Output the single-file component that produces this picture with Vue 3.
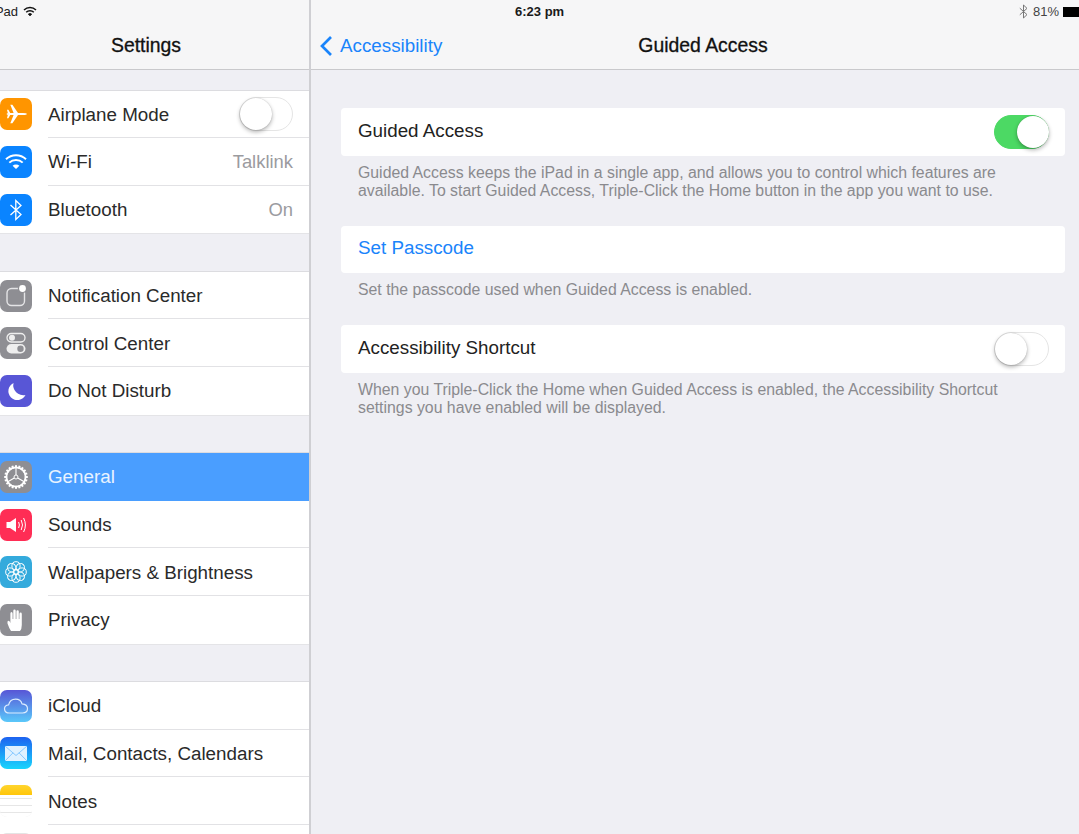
<script setup>
const groups = [
  [
    { label: 'Airplane Mode', icon: 'plane', toggle: true },
    { label: 'Wi-Fi', icon: 'wifi', value: 'Talklink' },
    { label: 'Bluetooth', icon: 'bt', value: 'On' },
  ],
  [
    { label: 'Notification Center', icon: 'notif' },
    { label: 'Control Center', icon: 'control' },
    { label: 'Do Not Disturb', icon: 'moon' },
  ],
  [
    { label: 'General', icon: 'gear', active: true },
    { label: 'Sounds', icon: 'sound' },
    { label: 'Wallpapers & Brightness', icon: 'flower' },
    { label: 'Privacy', icon: 'hand' },
  ],
  [
    { label: 'iCloud', icon: 'cloud' },
    { label: 'Mail, Contacts, Calendars', icon: 'mail' },
    { label: 'Notes', icon: 'notes' },
    { label: '', icon: 'none' },
  ],
]
const petals = [0, 45, 90, 135, 180, 225, 270, 315]
const teeth = Array.from({ length: 20 }, (_, i) => i * 18)
</script>

<template>
  <div class="ipad">
    <aside class="side">
      <header class="side-head">
        <div class="status status-left">
          <span class="carrier">iPad</span>
          <svg class="st-wifi" width="14" height="11" viewBox="0 0 14 11">
            <path d="M1 4 A8.5 8.5 0 0 1 13 4" fill="none" stroke="#111" stroke-width="1.5" />
            <path d="M3.2 6.2 A5.4 5.4 0 0 1 10.8 6.2" fill="none" stroke="#111" stroke-width="1.5" />
            <path d="M5.2 8.2 A2.6 2.6 0 0 1 8.8 8.2 L7 10 Z" fill="#111" stroke="#111" stroke-width=".6" />
          </svg>
        </div>
        <h1 class="title side-title">Settings</h1>
      </header>
      <div class="groups">
        <section v-for="(g, gi) in groups" :key="gi" class="group">
          <div v-for="row in g" :key="row.label" class="row" :class="{ active: row.active }">
            <span class="icon" :class="'i-' + row.icon">
              <svg v-if="row.icon === 'plane'" width="32" height="32" viewBox="0 0 32 32">
                <path d="M6.5 16 Q6.5 14.9 9.5 14.9 H13.6 L10.3 6.8 H12.4 L18 14.9 H23 Q26.8 14.9 26.8 16 Q26.8 17.1 23 17.1 H18 L12.4 25.2 H10.3 L13.6 17.1 H9.5 Q6.5 17.1 6.5 16 Z" fill="#fff" />
                <path d="M7 11.8 H8.4 L10.2 15 H7.8 Z M7 20.2 H8.4 L10.2 17 H7.8 Z" fill="#fff" />
              </svg>
              <svg v-else-if="row.icon === 'wifi'" width="32" height="32" viewBox="0 0 32 32">
                <path d="M6 13.2 A14.5 14.5 0 0 1 26 13.2" fill="none" stroke="#fff" stroke-width="2" />
                <path d="M9.3 16.6 A9.6 9.6 0 0 1 22.7 16.6" fill="none" stroke="#fff" stroke-width="2" />
                <path d="M12.6 19.8 A4.8 4.8 0 0 1 19.4 19.8 L16 23 Z" fill="#fff" />
              </svg>
              <svg v-else-if="row.icon === 'bt'" width="32" height="32" viewBox="0 0 32 32">
                <path d="M10.5 11 L21 20.5 L15.8 25.5 V6.5 L21 11.5 L10.5 21" fill="none" stroke="#fff" stroke-width="1.3" />
              </svg>
              <svg v-else-if="row.icon === 'notif'" width="32" height="32" viewBox="0 0 32 32">
                <rect x="7" y="8.5" width="17.5" height="17" rx="4.5" fill="none" stroke="#e4e4e6" stroke-width="1.4" />
                <circle cx="22.5" cy="8.5" r="4.6" fill="#8e8e93" />
                <circle cx="22.5" cy="8.5" r="3.4" fill="#fff" />
              </svg>
              <svg v-else-if="row.icon === 'control'" width="32" height="32" viewBox="0 0 32 32">
                <rect x="7" y="6.5" width="18" height="8.5" rx="4.25" fill="none" stroke="#eee" stroke-width="1.3" />
                <circle cx="12" cy="10.75" r="3" fill="#eee" />
                <rect x="6.5" y="17" width="19" height="9.5" rx="4.75" fill="#eee" />
                <circle cx="20.5" cy="21.75" r="3.2" fill="#8e8e93" />
              </svg>
              <svg v-else-if="row.icon === 'moon'" width="32" height="32" viewBox="0 0 32 32">
                <path d="M13.5 8 A9 9 0 1 0 25.5 20 A10 10 0 0 1 13.5 8 Z" fill="#fff" />
              </svg>
              <svg v-else-if="row.icon === 'gear'" width="32" height="32" viewBox="0 0 32 32">
                <g fill="#fff">
                  <rect v-for="t in teeth" :key="t" x="15" y="4.2" width="2" height="3" :transform="`rotate(${t} 16 16)`" />
                </g>
                <circle cx="16" cy="16" r="9.6" fill="none" stroke="#fff" stroke-width="1.8" />
                <circle cx="16" cy="16" r="2" fill="none" stroke="#fff" stroke-width="1" />
                <path d="M16 14 V7 M17.7 17 L23.8 20.5 M14.3 17 L8.2 20.5" stroke="#fff" stroke-width="1.1" />
              </svg>
              <svg v-else-if="row.icon === 'sound'" width="32" height="32" viewBox="0 0 32 32">
                <path d="M6.5 13 H10 L16 9 V23 L10 19 H6.5 Z" fill="#fff" />
                <path d="M18.6 13 Q20.2 16 18.6 19 M21.2 11 Q23.8 16 21.2 21 M23.6 9 Q27.2 16 23.6 23" fill="none" stroke="#fff" stroke-width="1" />
              </svg>
              <svg v-else-if="row.icon === 'flower'" width="32" height="32" viewBox="0 0 32 32">
                <g fill="none" stroke="#fff" stroke-width="1">
                  <circle v-for="p in petals" :key="p" cx="16" cy="9.8" r="4.1" :transform="`rotate(${p} 16 16)`" />
                  <circle cx="16" cy="16" r="2.4" />
                </g>
              </svg>
              <svg v-else-if="row.icon === 'hand'" width="32" height="32" viewBox="0 0 32 32">
                <path d="M11 27 Q9 24 7.5 19.5 Q7 17 8.4 16.8 Q9.6 16.7 10.4 19 V9.5 Q10.4 8 11.5 8 Q12.6 8 12.6 9.5 V15 H13.3 V6.8 Q13.3 5.4 14.5 5.4 Q15.7 5.4 15.7 6.8 V15 H16.4 V7.6 Q16.4 6.2 17.6 6.2 Q18.8 6.2 18.8 7.6 V15 H19.4 V10 Q19.4 8.6 20.6 8.6 Q21.8 8.6 21.8 10 V21 Q21.8 25 20 27 Z" fill="#fff" />
              </svg>
              <svg v-else-if="row.icon === 'cloud'" width="32" height="32" viewBox="0 0 32 32">
                <path d="M9.6 23 Q4.5 23 4.5 18.8 Q4.5 15.2 8.6 14.8 Q10 9.2 15.6 9.2 Q20.6 9.2 22 13.8 Q27.5 14.2 27.5 18.6 Q27.5 23 22.6 23 Z" fill="none" stroke="#dcecff" stroke-width="1.2" />
              </svg>
              <svg v-else-if="row.icon === 'mail'" width="32" height="32" viewBox="0 0 32 32">
                <rect x="5" y="9" width="22" height="15" fill="#dff1ff" />
                <path d="M5 9 L16 18.5 L27 9 M5 24 L13 15.8 M27 24 L19 15.8" fill="none" stroke="#7cc3ff" stroke-width=".9" />
              </svg>
              <span v-else-if="row.icon === 'notes'" class="note-lines"></span>
            </span>
            <span class="label">{{ row.label }}</span>
            <span v-if="row.value" class="value">{{ row.value }}</span>
            <span v-if="row.toggle" class="switch side-switch"><span class="knob"></span></span>
          </div>
        </section>
      </div>
    </aside>

    <main class="detail">
      <header class="detail-head">
        <div class="status status-main">
          <span class="time">6:23 pm</span>
          <span class="status-right">
            <svg width="9" height="15" viewBox="0 0 9 15">
              <path d="M.8 4.2 L8 10.6 L4.5 14 V1 L8 4.4 L.8 10.8" fill="none" stroke="#777" stroke-width="1" />
            </svg>
            <span class="batt-text">81%</span>
            <span class="battery"></span>
          </span>
        </div>
        <div class="nav">
          <span class="back">
            <svg width="14" height="22" viewBox="0 0 14 22">
              <path d="M12 2 L3 11 L12 20" fill="none" stroke="#1a84fb" stroke-width="2.7" />
            </svg>
            <span>Accessibility</span>
          </span>
          <h2 class="title nav-title">Guided Access</h2>
        </div>
      </header>
      <div class="content">
        <div class="card card-a">
          <span class="card-text">Guided Access</span>
          <span class="switch on"><span class="knob"></span></span>
        </div>
        <p class="note">Guided Access keeps the iPad in a single app, and allows you to control which features are<br>available. To start Guided Access, Triple-Click the Home button in the app you want to use.</p>
        <div class="card card-b link"><span class="card-text">Set Passcode</span></div>
        <p class="note single">Set the passcode used when Guided Access is enabled.</p>
        <div class="card card-c">
          <span class="card-text">Accessibility Shortcut</span>
          <span class="switch"><span class="knob"></span></span>
        </div>
        <p class="note">When you Triple-Click the Home when Guided Access is enabled, the Accessibility Shortcut<br>settings you have enabled will be displayed.</p>
      </div>
    </main>
  </div>
</template>

<style>
html, body { margin: 0; background: #efeff4; overflow: hidden; }
</style>

<style scoped>
.ipad {
  width: 1079px;
  height: 834px;
  display: flex;
  overflow: hidden;
  background: #efeff4;
  color: #222;
  font-family: "Liberation Sans", Arial, sans-serif;
  font-size: 18.8px;
}
.side {
  width: 311px;
  box-sizing: border-box;
  flex: none;
  height: 834px;
  overflow: hidden;
  border-right: 2px solid #cfcfd3;
}
.side-head, .detail-head {
  height: 69px;
  background: #f6f6f7;
  border-bottom: 1px solid #c9c9cc;
  position: relative;
}
.status { height: 23px; font-size: 13px; color: #222; display: flex; align-items: center; }
.status-left { margin-left: -8px; gap: 5px; }
.carrier { line-height: 23px; }
.title { margin: 0; font-size: 19.4px; font-weight: 400; text-align: center; color: #111; -webkit-text-stroke: .3px #111; line-height: 44px; }
.side-title { padding-right: 17px; }
.groups { padding-top: 20.6px; display: flex; flex-direction: column; gap: 38.5px; }
.group { background: #fff; box-shadow: 0 -1px 0 #dcdce0; }
.row {
  height: 47.6px;
  box-sizing: border-box;
  display: flex;
  align-items: center;
  position: relative;
  padding-right: 16px;
  color: #2a2a2a;
}
.row:not(:last-child)::after {
  content: "";
  position: absolute;
  left: 48px;
  right: 0;
  bottom: 0;
  height: 1px;
  background: #e2e2e5;
}
.group:nth-child(-n+3) { box-shadow: 0 -1px 0 #dcdce0, 0 1px 0 #e4e4e7; }
.row.active { background: #4a9eff; color: #e9f3ff; }
.row.active::after { display: none; }
.icon {
  width: 32px;
  height: 32px;
  border-radius: 7px;
  flex: none;
  margin-right: 16px;
  overflow: hidden;
  display: block;
}
.icon svg { display: block; }
.i-plane { background: #ff9500; }
.i-wifi, .i-bt { background: #0a84ff; }
.i-notif, .i-control, .i-gear, .i-hand { background: #8e8e93; }
.i-moon { background: #5856d6; }
.i-sound { background: #ff2d55; }
.i-flower { background: #34aadc; }
.i-cloud { background: linear-gradient(#5856d6, #5ac8fa); }
.i-mail { background: linear-gradient(#1d62f0, #19d5fd); }
.i-notes { background: #fff; box-shadow: inset 0 0 0 1px #eee; }
.i-none { background: #fff; box-shadow: inset 0 0 0 1px #e4e4e4; }
.note-lines {
  display: block;
  height: 32px;
  background:
    linear-gradient(#ffd52e, #ffc60a) 0 0 / 100% 10px no-repeat,
    repeating-linear-gradient(#fff 0 6px, #e6e6e6 6px 7px);
}
.label { flex: 1; white-space: nowrap; padding-top: 1px; }
.value { color: #9b9b9f; font-size: 18.4px; padding-top: 1px; }
.switch {
  width: 55px;
  height: 34px;
  box-sizing: border-box;
  border-radius: 17px;
  background: #fff;
  border: 1px solid #e5e5e5;
  position: relative;
  flex: none;
  display: block;
}
.knob {
  position: absolute;
  left: 0;
  top: 0;
  width: 32px;
  height: 32px;
  border-radius: 50%;
  background: #fff;
  box-shadow: 0 2px 4px rgba(0, 0, 0, .3), 0 0 1px rgba(0, 0, 0, .25);
}
.side-switch { margin-top: -1px; width: 54px; }
.switch.on { background: #4cd964; border-color: #4cd964; }
.switch.on .knob { left: auto; right: -1px; }
.detail { flex: 1; min-width: 0; height: 834px; }
.status-main { position: relative; padding-left: 204px; }
.time { font-size: 13px; font-weight: 700; color: #1a1a1a; }
.status-right { position: absolute; right: 0; top: 0; height: 23px; display: flex; align-items: center; gap: 5px; color: #444; font-size: 13px; }
.batt-text { margin-right: -1px; }
.battery { width: 16px; height: 10px; background: #000; display: block; }
.nav { position: relative; height: 46px; text-align: center; }
.nav-title { padding-left: 16px; }
.back { position: absolute; left: 8px; top: 0; height: 46px; display: flex; align-items: center; gap: 7px; color: #1a84fb; }
.content { padding: 38px 14px 0 30px; }
.card {
  height: 47.5px;
  box-sizing: border-box;
  background: #fff;
  border-radius: 4px;
  padding: 0 16px 0 17px;
  display: flex;
  align-items: center;
  justify-content: space-between;
  color: #222;
}
.card-text { padding-bottom: 2px; }
.link { color: #1a84fb; }
.note { margin: 8px 0 26px; padding: 0 16px 0 17px; font-size: 15.83px; line-height: 18px; color: #8a8a8e; white-space: nowrap; }
</style>
